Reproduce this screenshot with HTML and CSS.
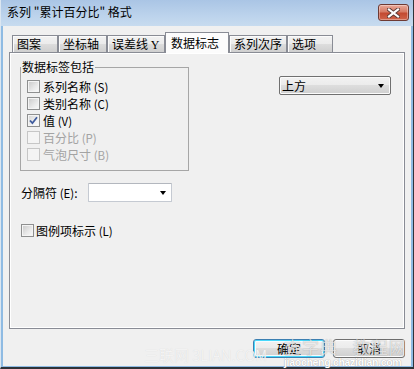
FILE: index.html
```html
<!DOCTYPE html>
<html lang="zh-CN">
<head>
<meta charset="utf-8">
<title>系列格式</title>
<link rel="stylesheet" href="styles.css">
</head>
<body>
<div class="window">
  <div class="titlebar">
    <span class="title">系列 "累计百分比" 格式</span>
    <span class="close">
      <svg width="13" height="10" viewBox="0 0 13 10"><path d="M2 1.5 L11 8.5 M11 1.5 L2 8.5" stroke="#5a3a36" stroke-width="4" stroke-linecap="square"/><path d="M2 1.5 L11 8.5 M11 1.5 L2 8.5" stroke="#ffffff" stroke-width="2.2" stroke-linecap="square"/></svg>
    </span>
  </div>
  <div class="client">
    <div class="tabs">
      <div class="tab w46">图案</div>
      <div class="tab w49">坐标轴</div>
      <div class="tab w58">误差线 <span class="asc">Y</span></div>
      <div class="tab tab-sel">数据标志</div>
      <div class="tab w58">系列次序</div>
      <div class="tab w46">选项</div>
    </div>
    <div class="panel">
      <div class="top-row">
        <fieldset class="group">
          <legend>数据标签包括</legend>
          <div class="row"><span class="cb"></span><span>系列名称 <span class="key">(S)</span></span></div>
          <div class="row"><span class="cb"></span><span>类别名称 <span class="key">(C)</span></span></div>
          <div class="row"><span class="cb cb-on"><svg width="9" height="9" viewBox="0 0 9 9"><path d="M1 4.5 L3.4 7.2 L8 1.2" fill="none" stroke="#3f5c9e" stroke-width="1.8"/></svg></span><span>值 <span class="key">(V)</span></span></div>
          <div class="row off"><span class="cb"></span><span>百分比 <span class="key">(P)</span></span></div>
          <div class="row off"><span class="cb"></span><span>气泡尺寸 <span class="key">(B)</span></span></div>
        </fieldset>
        <div class="combo combo-btn"><span>上方</span><span class="arrow"></span></div>
      </div>
      <div class="sep-row">
        <span class="sep-label">分隔符 <span class="key">(E)</span>:</span>
        <div class="combo combo-white"><span class="arrow"></span></div>
      </div>
      <div class="row legend-row"><span class="cb"></span><span>图例项标示 <span class="key">(L)</span></span></div>
    </div>
    <div class="buttons">
      <button class="btn btn-default">确定</button>
      <button class="btn">取消</button>
    </div>
  </div>
  <div class="wm wm-site">三联网 3LIAN.COM</div>
  <div class="wm wm-cn">查字典 教程网</div>
  <div class="wm wm-url">jiaocheng.chazidian.com</div>
</div>
</body>
</html>
```

FILE: styles.css
```css
* { box-sizing: border-box; }
html, body { margin: 0; padding: 0; }
body {
  width: 414px;
  height: 369px;
  overflow: hidden;
  font-family: "Noto Sans CJK SC", "Noto Sans", sans-serif;
  font-size: 12px;
  color: #000;
  background: #ffffff;
}
.window {
  position: relative;
  width: 414px;
  height: 369px;
  display: flex;
  flex-direction: column;
  background: #8fbbe3;
  border-left: 1px solid #dbe6f1;
  border-right: 1px solid #2e3338;
  border-bottom: 2px solid #2e3338;
  padding: 0 2px 1px 2px;
}
.titlebar {
  height: 26px;
  margin: 0 -2px;
  flex: none;
  display: flex;
  align-items: center;
  justify-content: space-between;
  padding: 0 4px 2px 6px;
  background: linear-gradient(#aac5e5, #bcd3ec 60%, #c7dbef);
}
.title {
  line-height: 16px;
  white-space: pre;
}
.close {
  width: 31px;
  height: 17px;
  margin-top: 1px;
  border: 1px solid #6e3a33;
  border-radius: 3px;
  display: flex;
  align-items: center;
  justify-content: center;
  background: linear-gradient(#e9a99a, #d67b65 45%, #c34a31 55%, #d0644a);
  box-shadow: inset 0 0 0 1px rgba(255,255,255,0.35);
}
.client {
  flex: 1;
  background: #f0f0f0;
  display: flex;
  flex-direction: column;
}
.tabs {
  display: flex;
  align-items: flex-end;
  height: 20px;
  margin-top: 6px;
  padding-left: 9px;
  position: relative;
  z-index: 1;
}
.tab {
  height: 17px;
  border: 1px solid #898c95;
  border-bottom: none;
  background: linear-gradient(#f2f2f2, #ebebeb 50%, #dddddd 50%, #cfcfcf);
  box-shadow: inset 1px 1px 0 #fbfbfb;
  padding-left: 4px;
  line-height: 15px;
  white-space: nowrap;
}
.w46 { width: 46px; }
.w49 { width: 49px; }
.w58 { width: 58px; }
.tab-sel {
  width: 64px;
  height: 21px;
  margin-bottom: -1px;
  background: #fcfcfc;
  box-shadow: none;
  padding-left: 5px;
  line-height: 19px;
}
.asc { font-family: "Liberation Serif", serif; font-size: 12px; }
.panel {
  margin-left: 6px;
  width: 396px;
  height: 277px;
  border: 1px solid #898c95;
  box-shadow: inset 0 0 0 1px #ffffff;
  background: #f0f0f0;
  padding: 6px 13px 0 10px;
  flex: none;
}
.top-row {
  display: flex;
  justify-content: space-between;
  align-items: flex-start;
}
.group {
  margin: 0;
  width: 169px;
  height: 112px;
  border: 1px solid #a6a6a6;
  padding: 3px 0 0 6px;
}
.group legend {
  padding: 0 1px;
  margin-left: -6px;
  line-height: 16px;
}
.row {
  display: flex;
  align-items: center;
  height: 17px;
  gap: 3px;
  line-height: 16px;
  white-space: nowrap;
}
.key { font-size: 11.5px; }
.off { color: #a3a3a3; }
.cb {
  width: 13px;
  height: 13px;
  flex: none;
  border: 1px solid #8e8f8f;
  padding: 1px;
  background: linear-gradient(135deg, #cdcdcd, #e9e9e9 60%, #f7f7f7) content-box, #f4f4f4;
  display: flex;
  align-items: center;
  justify-content: center;
}
.cb-on { background: linear-gradient(135deg, #d6d6d6, #f1f1f1 60%, #fbfbfb) content-box, #f4f4f4; }
.off .cb {
  border-color: #c6c6c6;
  background: #f4f4f4;
}
.combo {
  position: relative;
  display: flex;
  align-items: center;
  justify-content: space-between;
}
.combo-btn {
  width: 112px;
  height: 19px;
  margin-top: 17px;
  border: 1px solid #707070;
  border-radius: 2px;
  padding: 0 6px 0 2px;
  background: linear-gradient(#f2f2f2, #ebebeb 50%, #dddddd 50%, #cfcfcf);
  box-shadow: inset 0 0 0 1px #fbfbfb;
  line-height: 16px;
}
.arrow {
  width: 0;
  height: 0;
  border-left: 3.5px solid transparent;
  border-right: 3.5px solid transparent;
  border-top: 4px solid #000;
}
.sep-row {
  display: flex;
  align-items: center;
  gap: 4px;
  margin-top: 12px;
  padding-left: 1px;
  height: 19px;
  line-height: 16px;
}
.sep-label {
  width: 63px;
  flex: none;
  white-space: nowrap;
}
.combo-white {
  width: 84px;
  height: 19px;
  border: 1px solid #c5cad2;
  border-top-color: #b3b7be;
  border-radius: 1px;
  background: #ffffff;
  justify-content: flex-end;
  padding-right: 5px;
}
.legend-row {
  margin-top: 20px;
  padding-left: 1px;
  gap: 2px;
}
.buttons {
  display: flex;
  justify-content: flex-end;
  gap: 8px;
  margin-top: 10px;
  padding-right: 6px;
}
.btn {
  width: 72px;
  height: 19px;
  font: inherit;
  line-height: 15px;
  padding: 0;
  color: #000;
  border: 1px solid #707070;
  border-radius: 3px;
  background: linear-gradient(#f2f2f2, #ebebeb 50%, #dddddd 50%, #cfcfcf);
  box-shadow: inset 0 0 0 1px #fcfcfc;
}
.btn-default {
  border-color: #3c7fb1;
  box-shadow: inset 0 0 0 1px #48d8fb, inset 0 0 0 2px #f4fbfe;
}
.wm {
  position: absolute;
  white-space: nowrap;
  pointer-events: none;
}
.wm-site {
  left: 143px;
  top: 346px;
  font-family: "Noto Sans CJK SC", sans-serif;
  font-size: 15px;
  font-weight: 300;
  line-height: 18px;
  color: #f7f7f7;
  text-shadow: 0 0 1px #cfcfcf;
}
.wm-cn {
  left: 283px;
  top: 337px;
  font-size: 17px;
  line-height: 20px;
  letter-spacing: 1px;
  color: rgba(255,255,255,0.7);
  text-shadow: 0 0 1px rgba(0,0,0,0.35);
  word-spacing: 10px;
}
.wm-url {
  left: 283px;
  top: 357px;
  font-family: "Liberation Sans", sans-serif;
  font-weight: bold;
  font-size: 10.5px;
  letter-spacing: -0.3px;
  line-height: 11px;
  color: #ffffff;
  text-shadow: 0 0 1px #8a8a8a;
}
```
